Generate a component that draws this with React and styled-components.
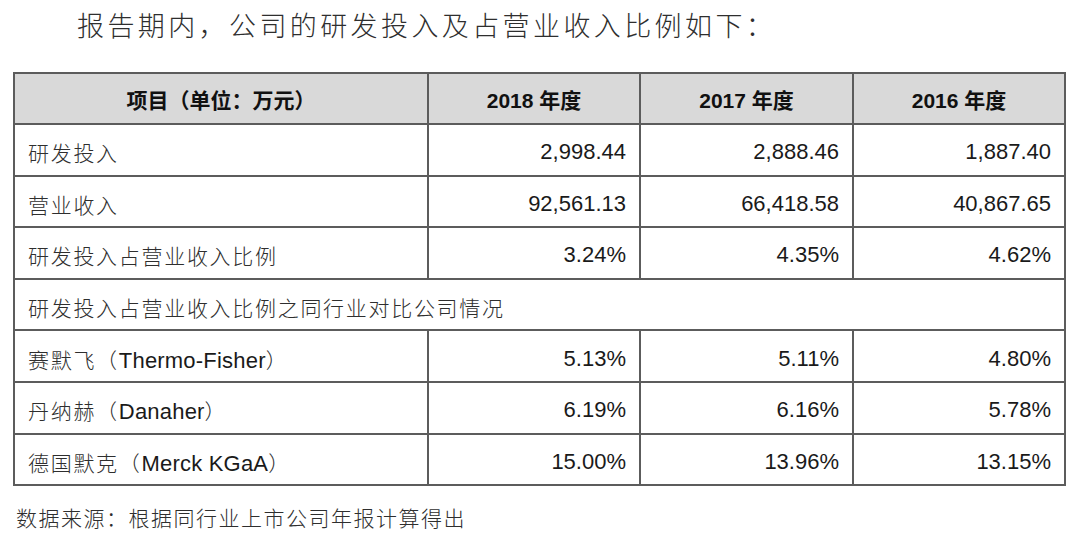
import React from 'react';
import styled, { createGlobalStyle } from 'styled-components';

const GlobalStyle = createGlobalStyle`
  html, body {
    margin: 0;
    padding: 0;
    background: #fff;
  }
  body {
    font-family: "Liberation Sans", "Noto Sans CJK SC", sans-serif;
    color: #222;
  }
`;

const rows = [
  { label: '研发投入', values: ['2,998.44', '2,888.46', '1,887.40'] },
  { label: '营业收入', values: ['92,561.13', '66,418.58', '40,867.65'] },
  { label: '研发投入占营业收入比例', values: ['3.24%', '4.35%', '4.62%'] },
  { label: '研发投入占营业收入比例之同行业对比公司情况', span: true },
  { label: '赛默飞', en: 'Thermo-Fisher', values: ['5.13%', '5.11%', '4.80%'] },
  { label: '丹纳赫', en: 'Danaher', values: ['6.19%', '6.16%', '5.78%'] },
  { label: '德国默克', en: 'Merck KGaA', values: ['15.00%', '13.96%', '13.15%'] },
];

const App = () => {
  return (
    <Page>
      <GlobalStyle />
      <Title>报告期内，公司的研发投入及占营业收入比例如下：</Title>
      <Table>
        <colgroup>
          <col style={{ width: '414px' }} />
          <col style={{ width: '212px' }} />
          <col style={{ width: '213px' }} />
          <col style={{ width: '212px' }} />
        </colgroup>
        <thead>
          <tr>
            <HeadCell>项目（单位：万元）</HeadCell>
            <HeadCell>2018 年度</HeadCell>
            <HeadCell>2017 年度</HeadCell>
            <HeadCell>2016 年度</HeadCell>
          </tr>
        </thead>
        <tbody>
          {rows.map((r, i) =>
            r.span ? (
              <tr key={i}>
                <LabelCell colSpan={4}>{r.label}</LabelCell>
              </tr>
            ) : (
              <tr key={i}>
                <LabelCell>
                  {r.label}
                  {r.en && (
                    <>
                      （<Latin>{r.en}</Latin>）
                    </>
                  )}
                </LabelCell>
                {r.values.map((v, j) => (
                  <NumCell key={j}>{v}</NumCell>
                ))}
              </tr>
            ),
          )}
        </tbody>
      </Table>
      <Note>数据来源：根据同行业上市公司年报计算得出</Note>
    </Page>
  );
};

const Page = styled.div`
  width: 1080px;
  height: 542px;
  padding: 6px 0 0 13px;
  box-sizing: border-box;
  overflow: hidden;
`;

const Title = styled.div`
  padding-left: 64px;
  height: 38px;
  line-height: 38px;
  font-family: "Noto Sans CJK SC", sans-serif;
  font-weight: 300;
  font-size: 27px;
  letter-spacing: 3.4px;
  color: #2e2e2e;
  white-space: nowrap;
`;

const Table = styled.table`
  margin-top: 28px;
  width: 1052px;
  table-layout: fixed;
  border-collapse: collapse;
  border: 2px solid #5c5c5c;
`;

const HeadCell = styled.th`
  height: 49px;
  padding: 0;
  background: #d9d9d9;
  border: 2px solid #5c5c5c;
  text-align: center;
  font-family: "Liberation Sans", "Noto Sans CJK SC", sans-serif;
  font-weight: 700;
  font-size: 21px;
  color: #111;
`;

const LabelCell = styled.td`
  height: 51.6px;
  padding: 5px 0 0 13px;
  border: 2px solid #5c5c5c;
  font-family: "Noto Sans CJK SC", sans-serif;
  font-weight: 300;
  font-size: 21px;
  letter-spacing: 1.7px;
  color: #2e2e2e;
  white-space: nowrap;
  box-sizing: border-box;
`;

const Latin = styled.span`
  font-family: "Liberation Sans", sans-serif;
  font-weight: 400;
  font-size: 22px;
  letter-spacing: 0.2px;
  color: #1a1a1a;
`;

const NumCell = styled.td`
  height: 51.6px;
  padding: 5px 13px 0 0;
  border: 2px solid #5c5c5c;
  text-align: right;
  font-family: "Liberation Sans", sans-serif;
  font-size: 22px;
  color: #1a1a1a;
  box-sizing: border-box;
`;

const Note = styled.div`
  margin-top: 16px;
  padding-left: 3px;
  font-family: "Noto Sans CJK SC", sans-serif;
  font-weight: 300;
  font-size: 21px;
  letter-spacing: 1.5px;
  color: #2e2e2e;
  white-space: nowrap;
`;

export default App;
